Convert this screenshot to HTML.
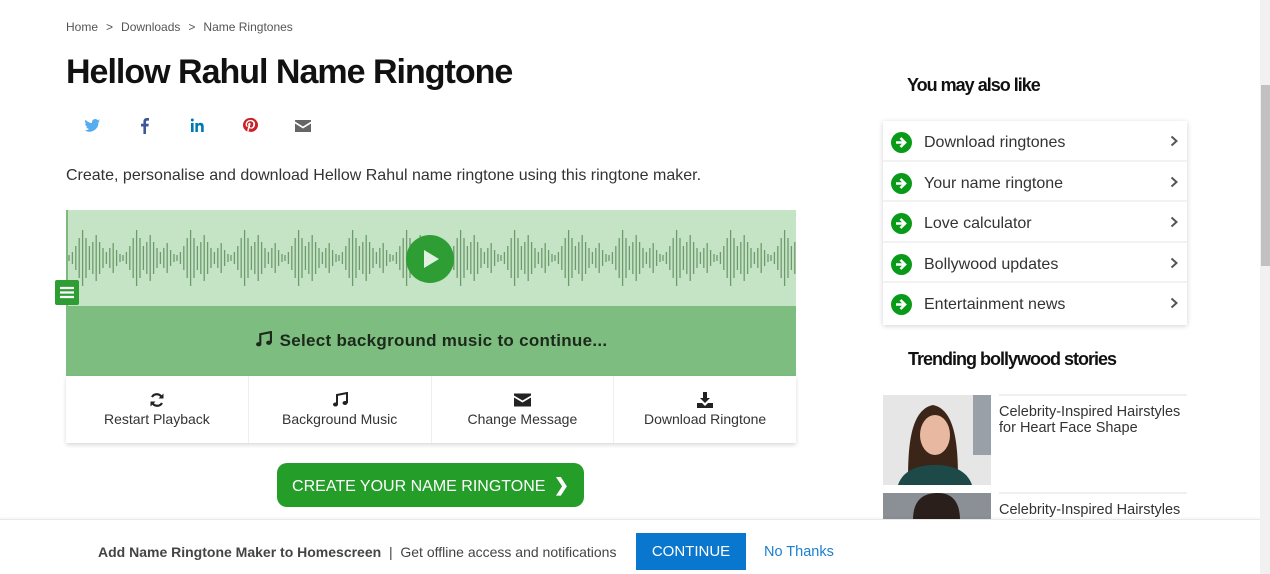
<!DOCTYPE html>
<html><head><meta charset="utf-8"><style>
*{margin:0;padding:0;box-sizing:border-box}
body{width:1270px;height:574px;overflow:hidden;background:#fff;font-family:"Liberation Sans",Arial,sans-serif;color:#333;position:relative}
.abs{position:absolute}
.bc{left:66px;top:20px;font-size:12px;color:#555}
.bc span{margin:0 8px;font-size:12px}
h1{position:absolute;left:66px;top:53px;font-size:34px;font-weight:bold;color:#111;letter-spacing:-1px}
.desc{left:66px;top:167px;font-size:16px;color:#333}
.wave{left:66px;top:210px;width:730px;height:96px;background:#c5e4c5;border-left:2px solid #7fb87f}
.band{left:66px;top:306px;width:730px;height:70px;background:#7dbd7f;text-align:center;font-weight:bold;font-size:17px;color:#1c2a1c;line-height:70px;letter-spacing:0.3px}
.btns{left:66px;top:376px;width:730px;height:67px;background:#fff;box-shadow:0 2px 4px rgba(0,0,0,.15);display:flex}
.btns div{flex:1;text-align:center;font-size:14px;color:#333;border-right:1px solid #eee;padding-top:16px}
.btns div:last-child{border-right:none}
.btns svg{display:block;margin:0 auto 3px}
.cta{left:277px;top:463px;width:307px;height:44px;background:#249e28;border-radius:10px;color:#fff;font-size:16px;line-height:44px;text-align:center}
.menu{left:55px;top:280px;width:24px;height:25px;background:#2e9e34;border-radius:2px}
.side1{left:907px;top:75px;font-size:18px;font-weight:bold;color:#111;letter-spacing:-1px}
.card{left:883px;top:121px;width:304px;height:204px;background:#fff;box-shadow:0 1px 5px rgba(0,0,0,.18)}
.row{height:40.6px;border-bottom:2px solid #f2f2f2;position:relative;font-size:16px;color:#333;line-height:43px;padding-left:41px}
.row:last-child{border-bottom:none}
.row .ic{position:absolute;left:8px;top:11px;width:21px;height:21px;border-radius:50%;background:#0a9a1a}
.row .ar{position:absolute;right:9px;top:14px}
.side2{left:908px;top:349px;font-size:18px;font-weight:bold;color:#111;letter-spacing:-1px}
.story{font-size:14.5px;color:#333;line-height:16px}
.bar{left:0;top:519px;width:1260px;height:55px;background:#fff;border-top:1px solid #e8e8e8;box-shadow:0 -1px 3px rgba(0,0,0,.05)}
.sb{left:1260px;top:0;width:10px;height:574px;background:#f1f1f1}
.thumb{left:1261px;top:85px;width:9px;height:181px;background:#c1c1c1}
</style></head><body>
<div class="abs bc">Home<span>&gt;</span>Downloads<span>&gt;</span>Name Ringtones</div>
<h1>Hellow Rahul Name Ringtone</h1>
<svg class="abs" style="left:84px;top:117px" width="230" height="18" viewBox="0 0 230 18">
<path fill="#55acee" d="M16 3.5c-.6.3-1.2.4-1.8.5.7-.4 1.1-1 1.4-1.7-.6.4-1.300.6-2 .8A3.2 3.2 0 0 0 8.1 6 9 9 0 0 1 1.5 2.6a3.2 3.2 0 0 0 1 4.3c-.5 0-1-.2-1.400-.4 0 1.5 1.1 2.8 2.5 3.1-.5.1-1 .2-1.4.1.4 1.3 1.6 2.2 3 2.2A6.4 6.4 0 0 1 .5 13.3 9 9 0 0 0 14.4 5.7v-.4c.6-.5 1.2-1 1.6-1.8z"/>
<path fill="#3b5998" d="M62 17v-7.5h2.4l.4-2.8H62V5c0-.8.3-1.4 1.4-1.4H65V1.1C64.7 1 63.9 1 62.9 1 60.8 1 59.4 2.3 59.4 4.6v2.1H57v2.8h2.4V17z"/>
<path fill="#0077b5" d="M107 6h2.6v9H107zM108.3 1.5a1.5 1.5 0 1 1 0 3 1.5 1.5 0 0 1 0-3zM111.4 6h2.5v1.2c.4-.7 1.3-1.4 2.6-1.4 2.7 0 3.2 1.8 3.2 4.1V15h-2.6v-4.4c0-1 0-2.4-1.5-2.4s-1.7 1.1-1.7 2.3V15h-2.5z"/>
<path fill="#cb2027" d="M166 1a7 7 0 0 0-2.6 13.5c0-.6 0-1.4.1-2l.9-3.8s-.2-.5-.2-1.1c0-1 .6-1.8 1.4-1.8.6 0 1 .5 1 1 0 .7-.4 1.6-.6 2.5-.2.7.4 1.300 1.100 1.3 1.3 0 2.2-1.7 2.2-3.7 0-1.5-1-2.7-2.9-2.7-2.1 0-3.400 1.6-3.400 3.3 0 .6.2 1 .5 1.3l.1.4-.2.6c0 .2-.2.3-.4.2-1-.4-1.4-1.5-1.4-2.7 0-2 1.7-4.4 5-4.4 2.7 0 4.5 2 4.5 4 0 2.8-1.5 4.8-3.8 4.8-.7 0-1.4-.4-1.7-.9l-.5 1.9c-.2.6-.5 1.2-.8 1.7A7 7 0 1 0 166 1z"/>
<path fill="#666" d="M211 3h16v1.5l-8 5-8-5zM211 6.5l8 5 8-5V15h-16z"/>
</svg>
<div class="abs desc">Create, personalise and download Hellow Rahul name ringtone using this ringtone maker.</div>
<div class="abs wave">
<svg width="728" height="96"><defs><pattern id="p" width="54" height="96" patternUnits="userSpaceOnUse" x="0">
<g stroke="#6d9a6d" stroke-width="1.3">
<line x1="1" x2="1" y1="45" y2="51"/><line x1="4.4" x2="4.4" y1="42" y2="54"/><line x1="7.8" x2="7.8" y1="36" y2="60"/><line x1="11.2" x2="11.2" y1="28" y2="68"/><line x1="14.6" x2="14.6" y1="20" y2="76"/><line x1="18" x2="18" y1="28" y2="68"/><line x1="21.4" x2="21.4" y1="36" y2="60"/><line x1="24.8" x2="24.8" y1="32" y2="64"/><line x1="28.2" x2="28.2" y1="25" y2="71"/><line x1="31.6" x2="31.6" y1="32" y2="64"/><line x1="35" x2="35" y1="38" y2="58"/><line x1="38.4" x2="38.4" y1="42" y2="54"/><line x1="41.8" x2="41.8" y1="38" y2="58"/><line x1="45.2" x2="45.2" y1="33" y2="63"/><line x1="48.6" x2="48.6" y1="40" y2="56"/><line x1="52" x2="52" y1="44" y2="52"/>
</g></pattern></defs><rect width="728" height="96" fill="url(#p)"/>
<circle cx="362" cy="49" r="24" fill="#2e9e34"/><path d="M356 40v18l15-9z" fill="#fff" opacity=".85"/></svg>
</div>
<div class="abs menu"><svg width="24" height="25"><path d="M5 8h14M5 12.5h14M5 17h14" stroke="#fff" stroke-width="2.2"/></svg></div>
<div class="abs band"><svg width="17" height="17" viewBox="0 0 16 16" style="vertical-align:-2px;margin-right:8px"><path d="M5 12V3l10-2v10" fill="none" stroke="#1c2a1c" stroke-width="2"/><ellipse cx="3.5" cy="12.5" rx="2.5" ry="2" fill="#1c2a1c"/><ellipse cx="13" cy="11" rx="2.5" ry="2" fill="#1c2a1c"/></svg>Select background music to continue...</div>
<div class="abs btns">
<div><svg width="16" height="16" viewBox="0 0 16 16"><path d="M13 6A5.5 5.5 0 0 0 3 5M3 10a5.5 5.5 0 0 0 10 1" fill="none" stroke="#222" stroke-width="2.2"/><path d="M14.5 1.5v5h-5zM1.5 14.5v-5h5z" fill="#222"/></svg>Restart Playback</div>
<div><svg width="16" height="16" viewBox="0 0 16 16"><path d="M5 12V3l10-2v10" fill="none" stroke="#222" stroke-width="2"/><ellipse cx="3.5" cy="12.5" rx="2.5" ry="2" fill="#222"/><ellipse cx="13" cy="11" rx="2.5" ry="2" fill="#222"/></svg>Background Music</div>
<div><svg width="17" height="16" viewBox="0 0 17 15"><path d="M0 1h17v2l-8.5 5L0 3zM0 5l8.5 5L17 5v9H0z" fill="#222"/></svg>Change Message</div>
<div><svg width="16" height="16" viewBox="0 0 16 16"><path d="M6 0h4v6h3l-5 5-5-5h3zM0 11h5l3 3 3-3h5v5H0z" fill="#222"/></svg>Download Ringtone</div>
</div>
<div class="abs cta">CREATE YOUR NAME RINGTONE <b style="font-size:18px;margin-left:4px">❯</b></div>

<div class="abs side1">You may also like</div>
<div class="abs card">
<div class="row"><i class="ic"></i><svg class="abs" style="left:8px;top:11px" width="21" height="21"><path d="M5 10.5h8M9.5 6l4.5 4.5-4.5 4.5" stroke="#fff" stroke-width="2.6" fill="none"/></svg>Download ringtones<svg class="ar" width="8" height="12"><path d="M1.5 1.5l5 4.5-5 4.5" stroke="#555" stroke-width="2" fill="none"/></svg></div>
<div class="row"><i class="ic"></i><svg class="abs" style="left:8px;top:11px" width="21" height="21"><path d="M5 10.5h8M9.5 6l4.5 4.5-4.5 4.5" stroke="#fff" stroke-width="2.6" fill="none"/></svg>Your name ringtone<svg class="ar" width="8" height="12"><path d="M1.5 1.5l5 4.5-5 4.5" stroke="#555" stroke-width="2" fill="none"/></svg></div>
<div class="row"><i class="ic"></i><svg class="abs" style="left:8px;top:11px" width="21" height="21"><path d="M5 10.5h8M9.5 6l4.5 4.5-4.5 4.5" stroke="#fff" stroke-width="2.6" fill="none"/></svg>Love calculator<svg class="ar" width="8" height="12"><path d="M1.5 1.5l5 4.5-5 4.5" stroke="#555" stroke-width="2" fill="none"/></svg></div>
<div class="row"><i class="ic"></i><svg class="abs" style="left:8px;top:11px" width="21" height="21"><path d="M5 10.5h8M9.5 6l4.5 4.5-4.5 4.5" stroke="#fff" stroke-width="2.6" fill="none"/></svg>Bollywood updates<svg class="ar" width="8" height="12"><path d="M1.5 1.5l5 4.5-5 4.5" stroke="#555" stroke-width="2" fill="none"/></svg></div>
<div class="row"><i class="ic"></i><svg class="abs" style="left:8px;top:11px" width="21" height="21"><path d="M5 10.5h8M9.5 6l4.5 4.5-4.5 4.5" stroke="#fff" stroke-width="2.6" fill="none"/></svg>Entertainment news<svg class="ar" width="8" height="12"><path d="M1.5 1.5l5 4.5-5 4.5" stroke="#555" stroke-width="2" fill="none"/></svg></div>
</div>
<div class="abs side2">Trending bollywood stories</div>
<div class="abs" style="left:999px;top:394px;width:188px;height:2px;background:#f0f0f0"></div>
<svg class="abs" style="left:883px;top:395px" width="108" height="90"><rect width="108" height="90" fill="#e6e6e6"/><rect x="90" width="18" height="60" fill="#9aa0a8"/><path d="M25 90c0-30 0-75 25-80 25 5 25 50 25 80z" fill="#3b2418"/><ellipse cx="52" cy="40" rx="15" ry="20" fill="#e8b9a0"/><path d="M15 90c5-15 20-20 37-20s32 5 37 20z" fill="#1d4a48"/></svg>
<div class="abs story" style="left:999px;top:404px">Celebrity-Inspired Hairstyles<br>for Heart Face Shape</div>
<div class="abs" style="left:999px;top:492px;width:188px;height:2px;background:#f0f0f0"></div>
<svg class="abs" style="left:883px;top:493px" width="108" height="27"><rect width="108" height="27" fill="#8a9096"/><path d="M30 27c0-20 10-27 25-27s22 10 22 27z" fill="#2a1f1a"/></svg>
<div class="abs story" style="left:999px;top:502px">Celebrity-Inspired Hairstyles</div>

<div class="abs bar">
<div class="abs" style="left:98px;top:24px;font-size:14px;color:#444"><b>Add Name Ringtone Maker to Homescreen</b>&nbsp; | &nbsp;Get offline access and notifications</div>
<div class="abs" style="left:636px;top:13px;width:110px;height:37px;background:#0a77cf;color:#fff;font-size:15px;line-height:37px;text-align:center">CONTINUE</div>
<div class="abs" style="left:764px;top:24px;font-size:14.5px;color:#1a7fd0">No Thanks</div>
</div>
<div class="abs sb"></div><div class="abs thumb"></div>
</body></html>
